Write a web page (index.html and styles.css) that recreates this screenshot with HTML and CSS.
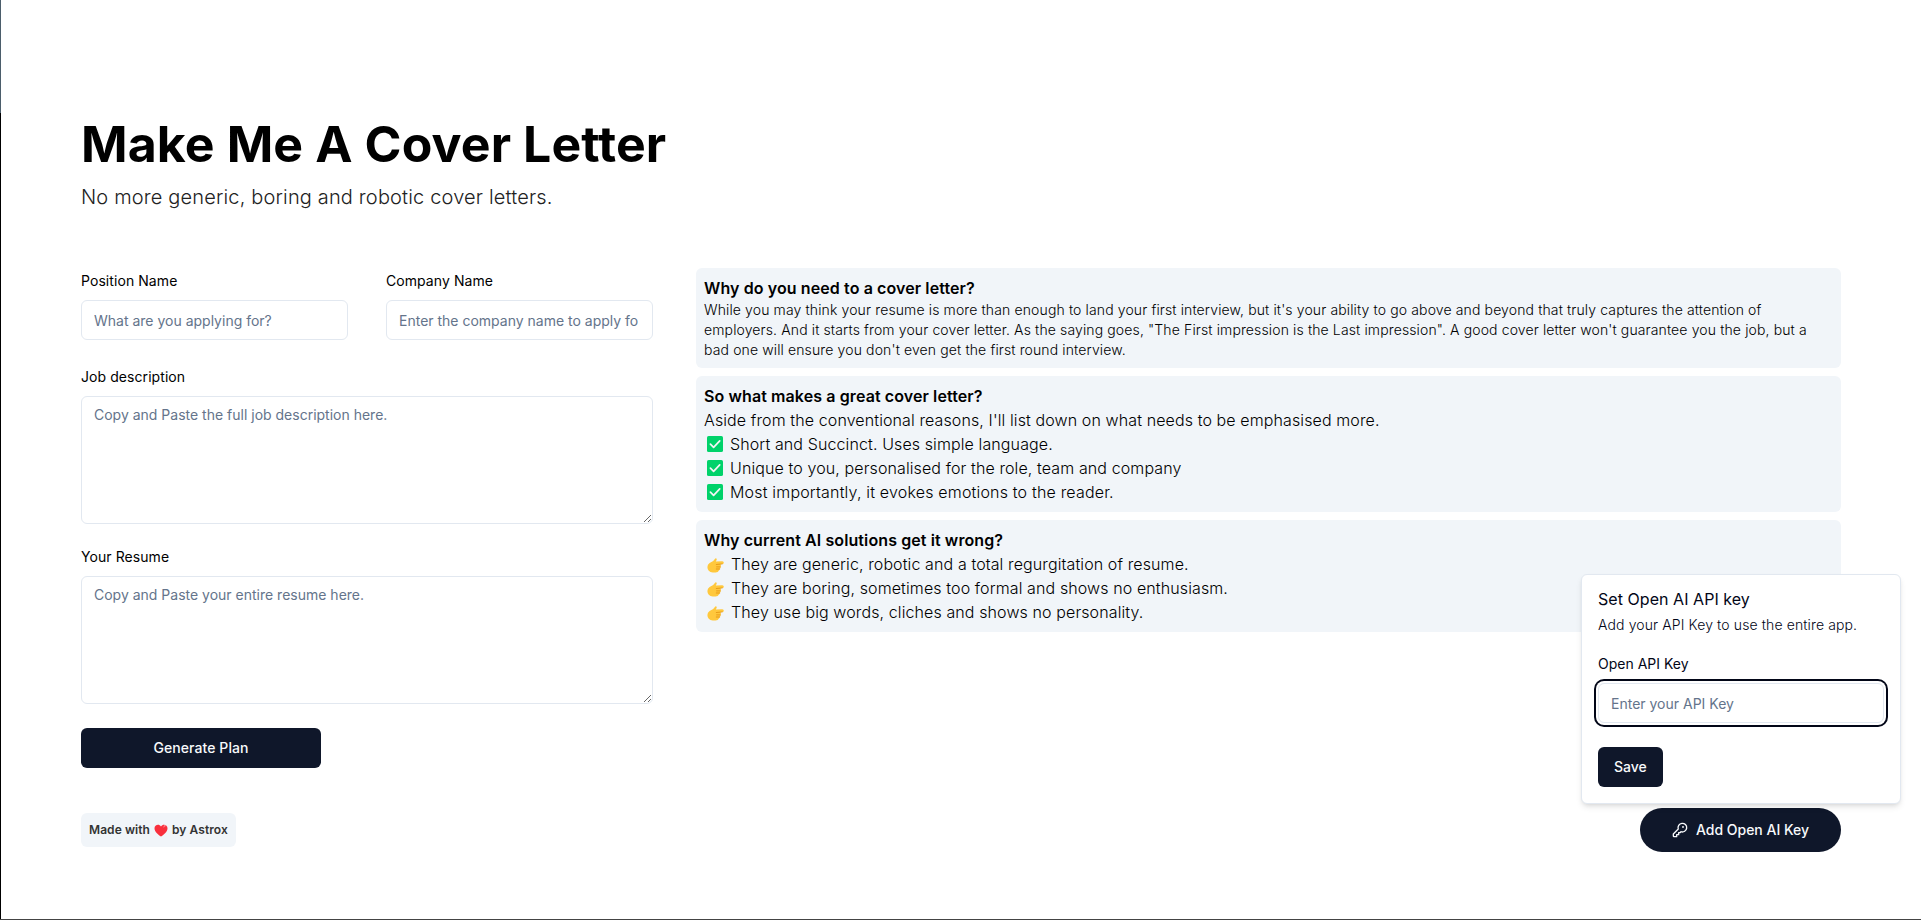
FILE: index.html
```html
<!DOCTYPE html>
<html lang="en">
<head>
<meta charset="utf-8">
<title>Make Me A Cover Letter</title>
<link rel="stylesheet" href="styles.css">
</head>
<body>
<svg class="sprite" aria-hidden="true">
  <symbol id="check" viewBox="0 0 16 16">
    <rect width="16" height="16" rx="1.6" fill="#00d26a"/>
    <path d="M3.4 8.2 6.6 11.4 12.7 4.9" fill="none" stroke="#f4f4f4" stroke-width="1.7" stroke-linecap="round" stroke-linejoin="round"/>
  </symbol>
  <symbol id="point" viewBox="0 0 17 15">
    <path d="M6.2 2.9 8.3.6Q9-.2 9.6.7 10 1.500 9.200 2.800L8.800 3.600 15.300 3.300Q16.800 3.400 16.800 4.700 16.800 5.900 15.300 6L13.400 6.200Q14.300 7.200 13.700 8.500 13.900 9.700 12.900 10.700 12.900 11.900 11.900 12.600 11.200 14.500 8.600 14.500H5.800Q.400 14 .400 9.100.4 6.300 2.600 5Z" fill="#ffc83d"/>
    <path d="M9.300 6.500 15.300 6M9.600 8.900H13.300M9.300 11H12.700" fill="none" stroke="#d67d00" stroke-width=".8" stroke-linecap="round" opacity=".75"/>
  </symbol>
</svg>
<main class="page">
  <header class="hero">
    <h1 class="hero-title">Make Me A Cover Letter</h1>
    <p class="hero-sub">No more generic, boring and robotic cover letters.</p>
  </header>
  <div class="columns">
    <form class="form">
      <div class="pair">
        <div class="field">
          <label class="label" for="position">Position Name</label>
          <input class="input" id="position" placeholder="What are you applying for?">
        </div>
        <div class="field">
          <label class="label" for="company">Company Name</label>
          <input class="input company" id="company" placeholder="Enter the company name to apply for">
        </div>
      </div>
      <div class="field">
        <label class="label" for="job">Job description</label>
        <textarea class="input area" id="job" placeholder="Copy and Paste the full job description here."></textarea>
      </div>
      <div class="field">
        <label class="label" for="resume">Your Resume</label>
        <textarea class="input area" id="resume" placeholder="Copy and Paste your entire resume here."></textarea>
      </div>
      <button class="button generate" type="button">Generate Plan</button>
    </form>
    <section class="notes">
      <article class="note">
        <h2 class="note-title">Why do you need to a cover letter?</h2>
        <p class="note-small">While you may think your resume is more than enough to land your first interview, but it's your ability to go above and beyond that truly captures the attention of employers. And it starts from your cover letter. As the saying goes, "The First impression is the Last impression". A good cover letter won't guarantee you the job, but a bad one will ensure you don't even get the first round interview.</p>
      </article>
      <article class="note">
        <h2 class="note-title">So what makes a great cover letter?</h2>
        <p class="note-text">Aside from the conventional reasons, I'll list down on what needs to be emphasised more.</p>
        <ul class="list">
          <li class="item"><svg class="check"><use href="#check"/></svg>Short and Succinct. Uses simple language.</li>
          <li class="item"><svg class="check"><use href="#check"/></svg>Unique to you, personalised for the role, team and company</li>
          <li class="item loose"><svg class="check"><use href="#check"/></svg>Most importantly, it evokes emotions to the reader.</li>
        </ul>
      </article>
      <article class="note">
        <h2 class="note-title">Why current AI solutions get it wrong?</h2>
        <ul class="list">
          <li class="item"><svg class="point"><use href="#point"/></svg>They are generic, robotic and a total regurgitation of resume.</li>
          <li class="item"><svg class="point"><use href="#point"/></svg>They are boring, sometimes too formal and shows no enthusiasm.</li>
          <li class="item"><svg class="point"><use href="#point"/></svg>They use big words, cliches and shows no personality.</li>
        </ul>
      </article>
    </section>
  </div>
  <footer class="footer">
    <div class="badge">Made with
      <svg class="heart" viewBox="0 0 14 13"><path d="M7 12.600C4.800 11 .5 8 .5 4.200.5 1 4.900-.800 7 2.500 9.100-.800 13.500 1 13.500 4.200 13.500 8 9.200 11 7 12.600Z" fill="#f92f3c"/><path d="M9.600 2Q11-.100 12.500 2.200 10.800 1.700 9.600 4Z" fill="#ff8a93"/></svg>
      by Astrox</div>
    <div class="key-anchor">
      <button class="button key-button" type="button">
        <svg class="key" viewBox="0 0 24 24" fill="none" stroke="currentColor" stroke-width="2" stroke-linecap="round" stroke-linejoin="round"><path d="M2 18v3c0 .6.400 1 1 1h4v-3h3v-3h2l1.400-1.400a6.500 6.500 0 1 0-4-4Z"/><circle cx="16.500" cy="7.500" r=".5"/></svg>
        Add Open AI Key</button>
      <section class="popover">
        <h3 class="pop-title">Set Open AI API key</h3>
        <p class="pop-text">Add your API Key to use the entire app.</p>
        <label class="pop-label" for="key">Open API Key</label>
        <input class="input focused" id="key" placeholder="Enter your API Key">
        <button class="button save" type="button">Save</button>
      </section>
    </div>
  </footer>
</main>
</body>
</html>
```
FILE: styles.css
```css
*, *::before, *::after { box-sizing: border-box; }
body { margin: 0; font: 400 14px/20px Inter, sans-serif; color: #000; background: #fff; }
h1, h2, h3, p, ul { margin: 0; padding: 0; }
ul { list-style: none; }
button, input, textarea { font: inherit; }
.sprite { display: none; }
.page {
  height: 920px;
  padding: 114px 80px 0 81px;
  border-bottom: 1px solid #444;
  background: linear-gradient(#4b5d6b 0 113px, #000 113px) 0 0 / 1px 100% no-repeat;
}
.hero { height: 154px; }
.hero-title { font-size: 50px; line-height: 60px; font-weight: 700; letter-spacing: .11px; }
.hero-sub { margin-top: 8px; font-size: 20px; line-height: 30px; font-weight: 300; letter-spacing: .16px; color: #222; }
.columns { display: grid; grid-template-columns: 572px 1fr; column-gap: 43px; }
.form { display: flex; flex-direction: column; height: 500px; }
.pair { display: grid; grid-template-columns: 1fr 1fr; column-gap: 38px; margin-bottom: 4px; }
.field { display: flex; flex-direction: column; margin-bottom: 20px; }
.pair .field { margin-bottom: 20px; }
.field + .field > .label { letter-spacing: .07px; }
.label { height: 32px; padding-top: 6px; line-height: 14px; letter-spacing: .07px; }
.input {
  width: 100%; height: 40px; margin: 0; padding: 8px 12px;
  border: 1px solid #e2e8f0; border-radius: 6px; background: #fff; outline: none;
}
.input::placeholder { color: #64748b; opacity: 1; }
.company { padding-right: 14px; }
.area { display: block; height: 128px; margin-bottom: 4px; resize: vertical; }
.field:nth-of-type(2) .area { margin-bottom: 0; }
.button {
  display: flex; align-items: center; justify-content: center; flex-shrink: 0;
  height: 40px; padding: 0 16px; border: 0; border-radius: 6px;
  background: #0f172a; color: #f8fafc; font-weight: 500;
}
.generate { width: 240px; letter-spacing: .07px; }
.notes { display: flex; flex-direction: column; gap: 8px; align-self: start; }
.note { padding: 8px; border-radius: 6px; background: #f1f5f9; }
.note-title { font-size: 16px; line-height: 24px; font-weight: 600; letter-spacing: .1px; }
.note-small { font-size: 14px; line-height: 20px; font-weight: 300; letter-spacing: .127px; }
.note-text, .item { font-size: 16px; line-height: 24px; font-weight: 300; letter-spacing: .11px; }
.item { display: flex; align-items: center; }
.loose { letter-spacing: .18px; }
.check { width: 16px; height: 16px; margin: 0 7px 0 3px; }
.point { width: 17px; height: 15px; margin: 2px 7px 0 3px; }
.footer { display: flex; justify-content: space-between; align-items: center; height: 44px; margin-top: 40px; }
.badge {
  display: flex; align-items: center; gap: 4px; height: 34px; padding: 0 8px;
  border-radius: 6px; background: #f1f5f9; font-size: 12px; font-weight: 600; letter-spacing: .07px; color: #333;
}
.heart { width: 14px; height: 13px; }
.key-anchor { position: relative; }
.key-button { width: 201px; height: 44px; border-radius: 22px; }
.key { width: 16px; height: 16px; margin-right: 8px; }
.popover {
  position: absolute; right: -60px; bottom: 48px; width: 320px; height: 230px;
  display: flex; flex-direction: column; align-items: flex-start; padding: 12px 16px 16px;
  border: 1px solid #e2e8f0; border-radius: 6px; background: #fff; color: #020617;
  box-shadow: 0 4px 6px -1px rgb(0 0 0 / .1), 0 2px 4px -2px rgb(0 0 0 / .1);
}
.pop-title { font-size: 16px; line-height: 24px; font-weight: 400; letter-spacing: .05px; }
.pop-text { margin-top: 4px; line-height: 20px; font-weight: 300; letter-spacing: .12px; }
.pop-label { margin-top: 22px; line-height: 14px; }
.focused { margin-top: 12px; box-shadow: 0 0 0 2px #fff, 0 0 0 4px #020617; }
.save { margin-top: 24px; }
```
